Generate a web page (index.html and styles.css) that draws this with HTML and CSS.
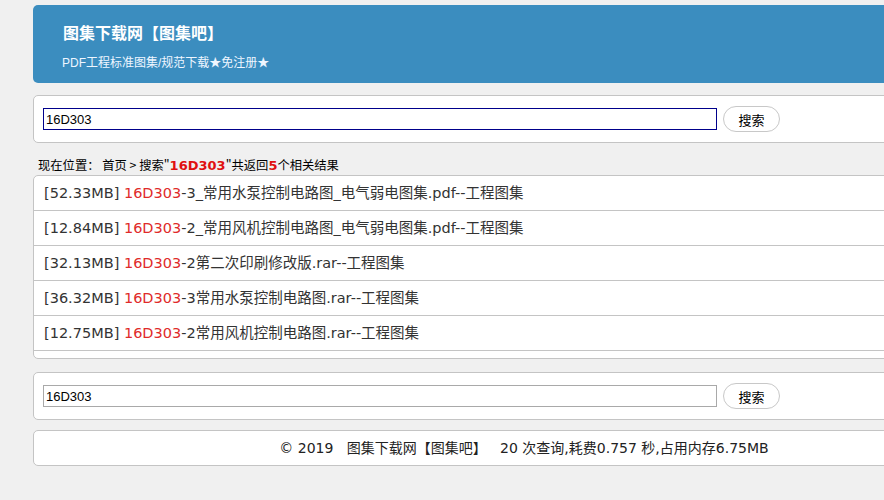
FILE: index.html
```html
<!DOCTYPE html>
<html lang="zh-CN">
<head>
    <meta charset="UTF-8">
    <meta name="viewport" content="width=device-width, initial-scale=1.0">
    <title>16D303 - 图集下载网【图集吧】</title>
    <link rel="stylesheet" href="styles.css">
</head>
<body>
<div class="wrap">

    <!-- 顶部 -->
    <div class="header">
        <h1 class="site-name">图集下载网【图集吧】</h1>
        <p class="slogan">PDF工程标准图集/规范下载★免注册★</p>
    </div>

    <!-- 搜索框 -->
    <div class="box search-box">
        <input class="search-input focus" type="text" value="16D303">
        <button class="search-btn">搜索</button>
    </div>

    <div class="crumb">
        现在位置：&nbsp;首页&nbsp;&gt;&nbsp;搜索"<b>16D303</b>"共返回<b>5</b>个相关结果
    </div>

    <!-- 结果列表 -->
    <ul class="box result-list">
        <li><span class="size">[52.33MB]</span> <em>16D303</em>-3_常用水泵控制电路图_电气弱电图集.pdf--工程图集</li>
        <li><span class="size">[12.84MB]</span> <em>16D303</em>-2_常用风机控制电路图_电气弱电图集.pdf--工程图集</li>
        <li><span class="size">[32.13MB]</span> <em>16D303</em>-2第二次印刷修改版.rar--工程图集</li>
        <li><span class="size">[36.32MB]</span> <em>16D303</em>-3常用水泵控制电路图.rar--工程图集</li>
        <li><span class="size">[12.75MB]</span> <em>16D303</em>-2常用风机控制电路图.rar--工程图集</li>
    </ul>

    <div class="box search-box bottom-search">
        <input class="search-input" type="text" value="16D303">
        <button class="search-btn">搜索</button>
    </div>

    <!-- 底部 -->
    <div class="box footer">
        ©&nbsp;2019&nbsp;&nbsp; 图集下载网【图集吧】&nbsp;&nbsp; 20 次查询,耗费0.757 秒,占用内存6.75MB
    </div>

</div>
</body>
</html>
```

FILE: styles.css
```css
html, body {
    margin: 0;
    padding: 0;
    background-color: #f0f0f0;
    overflow-x: hidden;
}

body {
    font-family: "DejaVu Sans", Verdana, "Noto Sans CJK SC", sans-serif;
    color: #333;
}

.wrap {
    width: 982px;
    margin-left: 33px;
    padding-top: 5px;
}

/* 顶部 */
.header {
    background-color: #3b8dbf;
    border-radius: 5px;
    height: 78px;
    box-sizing: border-box;
    padding: 19px 0 0 30px;
    color: #fff;
}

.site-name {
    margin: 0;
    font-family: "Noto Sans CJK SC", sans-serif;
    font-size: 16px;
    font-weight: bold;
    line-height: 17px;
}

.slogan {
    margin: 14px 0 0 -1px;
    font-family: "Liberation Sans", "Noto Sans CJK SC", sans-serif;
    font-size: 12px;
    line-height: 16px;
    color: #eef6ff;
}

/* 通用白框 */
.box {
    background-color: #fff;
    border: 1px solid #c4c4c4;
    border-radius: 5px;
}

.search-box {
    margin-top: 12px;
    height: 46px;
    display: flex;
    align-items: center;
    padding-left: 9px;
}

.bottom-search {
    margin-top: 13px;
}

.search-input {
    width: 674px;
    height: 22px;
    box-sizing: border-box;
    margin: 0;
    padding: 0 2px;
    border: 1px solid #a9a9a9;
    font-family: "Liberation Sans", Arial, sans-serif;
    font-size: 13px;
    color: #000;
    outline: none;
}

.search-input.focus {
    border-color: #00008b;
}

.search-btn {
    margin-left: 6px;
    width: 57px;
    height: 26px;
    border: 1px solid #c8c8c8;
    border-radius: 13px;
    background-color: #fff;
    font-family: "Noto Sans CJK SC", sans-serif;
    font-size: 13px;
    color: #000;
    padding: 0;
}

/* 当前位置 */
.crumb {
    height: 32px;
    box-sizing: border-box;
    padding: 15px 0 0 5px;
    font-family: "Noto Sans CJK SC", sans-serif;
    font-size: 12.3px;
    line-height: 14px;
    color: #000;
}

.crumb b {
    font-family: "DejaVu Sans", Verdana, sans-serif;
    font-size: 13px;
    color: #e01010;
}

/* 结果列表 */
.result-list {
    list-style: none;
    margin: 0;
    padding: 0 0 7px 0;
}

.result-list li {
    height: 34px;
    line-height: 34px;
    border-bottom: 1px solid #c4c4c4;
    padding-left: 10px;
    font-size: 14.5px;
    white-space: nowrap;
}

.result-list .size {
    color: #333;
}

.result-list em {
    font-style: normal;
    color: #e02a2a;
}

/* 底部 */
.footer {
    margin-top: 10px;
    height: 34px;
    line-height: 35px;
    text-align: center;
    font-size: 14px;
    color: #222;
}
```
